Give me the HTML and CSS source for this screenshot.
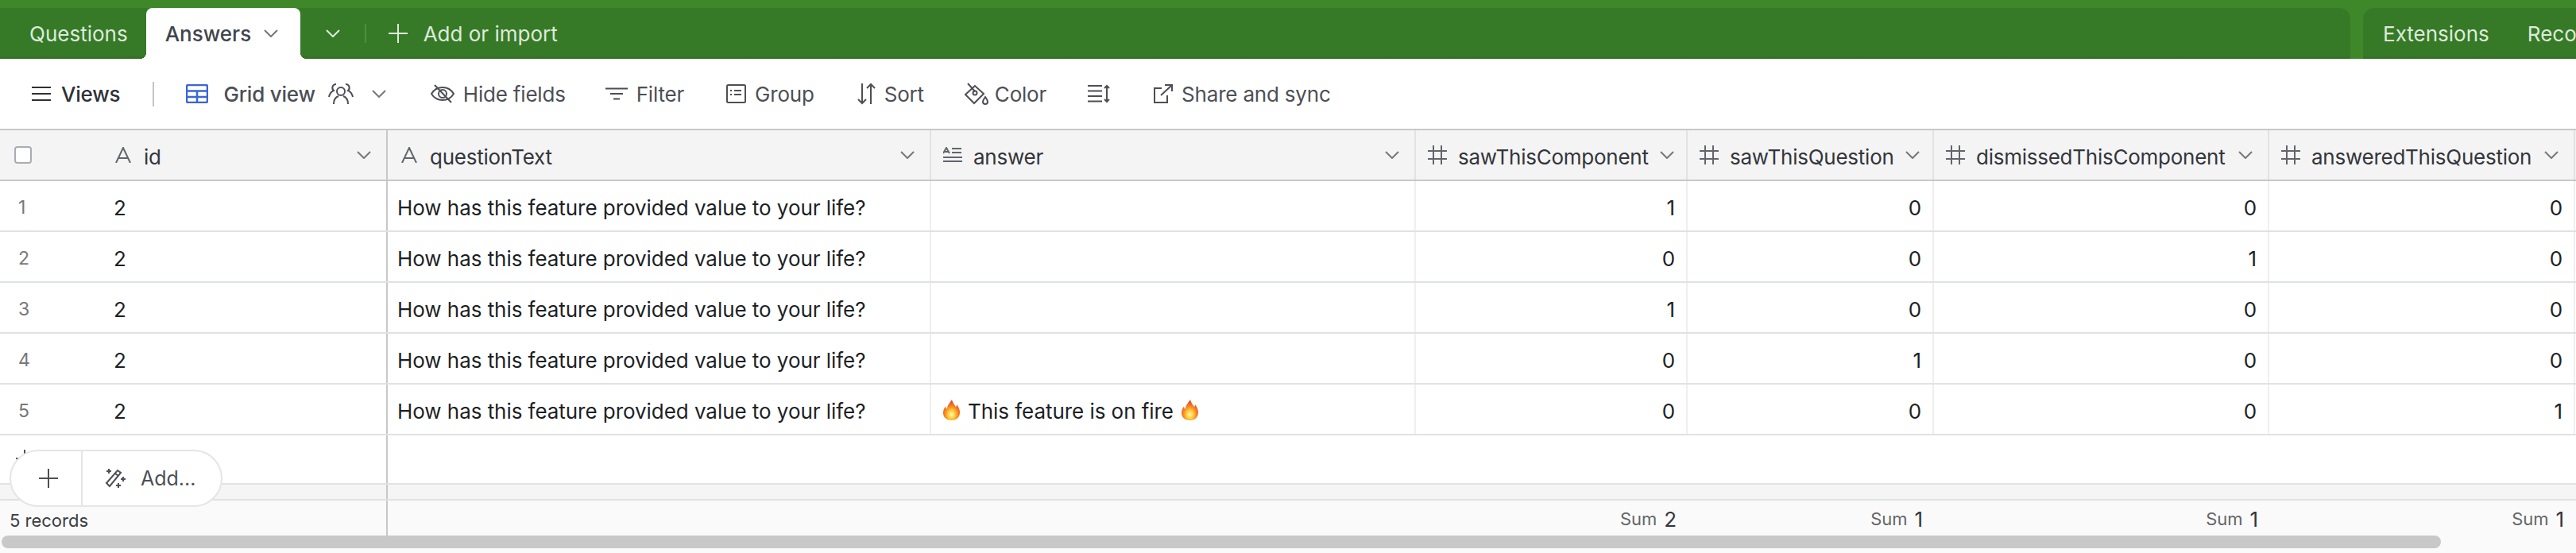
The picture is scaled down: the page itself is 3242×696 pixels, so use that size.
FILE: index.html
```html
<!DOCTYPE html>
<html lang="en">
<head>
    <meta charset="UTF-8">
    <title>Answers: Grid view</title>
    <link rel="stylesheet" href="styles.css">
</head>
<body>

    <header class="topbar">
        <nav class="tabs">
            <span class="tab">Questions</span>
            <span class="tab tab-active">Answers
                <svg class="chev" width="18" height="10" viewBox="0 0 18 10"><path d="M1 1l8 8 8-8"/></svg>
            </span>
            <svg class="chev chev-light more" width="18" height="10" viewBox="0 0 18 10"><path d="M1 1l8 8 8-8"/></svg>
            <span class="tab-sep"></span>
            <span class="add-import">
                <svg class="line-icon" width="26" height="26" viewBox="0 0 26 26"><path d="M13 1v24M1 13h24"/></svg>
                Add or import
            </span>
        </nav>
        <div class="side">
            <span class="tab">Extensions</span>
            <span class="tab-sep side-sep"></span>
            <span class="tab">Reco</span>
        </div>
    </header>

    <div class="toolbar">
        <span class="tool tool-views">
            <svg class="line-icon" width="24" height="20" viewBox="0 0 24 20"><path d="M0 2h24M0 10h24M0 18h24"/></svg>
            Views
        </span>
        <span class="tool-sep"></span>
        <span class="tool tool-view">
            <svg class="grid-icon" width="28" height="24" viewBox="0 0 28 24"><rect x="1" y="1" width="26" height="22" rx="2"/><path d="M1 8.500h26M1 16h26M14 8.500V23"/></svg>
            Grid view
            <svg class="line-icon users" width="32" height="28" viewBox="0 0 32 28"><circle cx="16" cy="11" r="5"/><path d="M7 27c0-6 3-9 6-10M25 27c0-6-3-9-6-10M10 2a4.500 4.500 0 0 0-3 8c-3 1-5 4-6 8M22 2a4.500 4.500 0 0 1 3 8c3 1 5 4 6 8"/></svg>
            <svg class="chev" width="18" height="10" viewBox="0 0 18 10"><path d="M1 1l8 8 8-8"/></svg>
        </span>
        <span class="tool tool-hide">
            <svg class="line-icon" width="30" height="24" viewBox="0 0 30 24"><path d="M1 12c3-5 8-8 14-8s11 3 14 8c-3 5-8 8-14 8S4 17 1 12z"/><circle cx="15" cy="12" r="5"/><path d="M5 1l21 22"/></svg>
            Hide fields
        </span>
        <span class="tool">
            <svg class="line-icon" width="28" height="16" viewBox="0 0 28 16"><path d="M0 1.500h28M6 8h16M10 14.500h8"/></svg>
            Filter
        </span>
        <span class="tool tool-group">
            <svg class="line-icon" width="25" height="24" viewBox="0 0 25 24"><rect x="1" y="1" width="23" height="22" rx="1.500"/><path d="M10 8h9M10 13h9"/><path class="dots" d="M6 7v2M6 12v2"/></svg>
            Group
        </span>
        <span class="tool tool-sort">
            <svg class="line-icon" width="23" height="28" viewBox="0 0 23 28"><path d="M6 1v25M1 21l5 5 5-5M17 27V2M12 7l5-5 5 5"/></svg>
            Sort
        </span>
        <span class="tool tool-color">
            <svg class="line-icon" width="31" height="28" viewBox="0 0 31 28"><path d="M14 4L2 15l11 11 12-12z"/><circle cx="14" cy="13" r="2.500"/><path d="M14 11L5 1"/><path d="M27 18c-2 3-3 4-3 6a3 3 0 0 0 6 0c0-2-1-3-3-6z"/></svg>
            Color
        </span>
        <span class="tool tool-height">
            <svg class="line-icon" width="29" height="24" viewBox="0 0 29 24"><path d="M0 2h18M0 8.500h18M0 15h18M0 21.500h18M24 2v20M21 5l3-3 3 3M21 19l3 3 3-3"/></svg>
        </span>
        <span class="tool tool-share">
            <svg class="line-icon" width="24" height="24" viewBox="0 0 24 24"><path d="M10 5H1v18h16v-9M9 14L23 1M14 1h9v8"/></svg>
            Share and sync
        </span>
    </div>

    <main class="grid">
        <div class="grid-row head-row" id="headRow"></div>
        <div id="rows"></div>
        <div class="grid-blank">
            <svg class="line-icon" width="22" height="22" viewBox="0 0 22 22"><path d="M11 0v22M0 11h22"/></svg>
        </div>
        <div class="grid-band"></div>
        <div class="grid-row foot-row" id="footRow"></div>
        <div class="scrollbar"></div>
    </main>

    <div class="add-pill">
        <span class="pill-plus">
            <svg class="line-icon" width="24" height="24" viewBox="0 0 24 24"><path d="M12 0v24M0 12h24"/></svg>
        </span>
        <span class="pill-add">
            <svg class="line-icon" width="28" height="26" viewBox="0 0 28 26"><path d="M3 19L17 3l4 3L7 23z"/><path d="M14 7l4 3M6 1v6M3 4h6M24 11v6M21 14h6M18 19v6M15 22h6"/></svg>
            Add...
        </span>
    </div>

    <script>
        const CHEV = '<svg class="chev" width="18" height="10" viewBox="0 0 18 10"><path d="M1 1l8 8 8-8"/></svg>';
        const ICONS = {
            text: '<svg class="line-icon thin" width="24" height="20" viewBox="0 0 24 20"><path d="M3 20L12 1l9 19M6 14h12"/></svg>',
            long: '<svg class="line-icon thin" width="24" height="20" viewBox="0 0 24 20"><path d="M0 8L4 1l4 7M1.500 6h5M11 2h12M11 7h12M0 13h24M0 18h24"/></svg>',
            num: '<svg class="line-icon thin" width="24" height="24" viewBox="0 0 24 24"><path d="M7 0v24M17 0v24M0 7h24M0 17h24"/></svg>'
        };
        const FLAME = '<svg class="flame" role="img" aria-label="fire" width="21" height="26" viewBox="0 0 21 26"><defs><radialGradient id="fl" cx="50%" cy="72%" r="62%"><stop offset="0" stop-color="#fff6c8"/><stop offset=".3" stop-color="#ffd23c"/><stop offset=".62" stop-color="#f98a22"/><stop offset="1" stop-color="#e5482a"/></radialGradient></defs><path fill="url(#fl)" d="M11 0c1 4 3 6 5 9 1-1 1-2 1-3 3 4 4 7 4 10 0 6-4 10-10.500 10S0 22 0 16.500c0-3 1-5 3-8 0 2 1 3 2 3C5 7 8 5 11 0z"/></svg>';

        let columns = [
            { name: "id", icon: "text" },
            { name: "questionText", icon: "text" },
            { name: "answer", icon: "long" },
            { name: "sawThisComponent", icon: "num" },
            { name: "sawThisQuestion", icon: "num" },
            { name: "dismissedThisComponent", icon: "num" },
            { name: "answeredThisQuestion", icon: "num" }
        ];

        let question = "How has this feature provided value to your life?";
        let records = [
            { answer: "", values: [1, 0, 0, 0] },
            { answer: "", values: [0, 0, 1, 0] },
            { answer: "", values: [1, 0, 0, 0] },
            { answer: "", values: [0, 1, 0, 0] },
            { answer: `${FLAME} This feature is on fire ${FLAME}`, values: [0, 0, 0, 1] }
        ];

        function headCell(col, index) {
            let first = index === 0 ? " cell-first" : "";
            return `<div class="cell head-cell${first}">${ICONS[col.icon]}<span class="head-name">${col.name}</span>${CHEV}</div>`;
        }

        function renderHead() {
            let check = '<div class="cell-num head-check"><span class="checkbox"></span></div>';
            document.getElementById("headRow").innerHTML = check + columns.map(headCell).join("");
        }

        function renderRows() {
            let html = "";
            records.forEach((rec, index) => {
                let nums = rec.values.map(v => `<div class="cell cell-right">${v}</div>`).join("");
                html += `<div class="grid-row body-row">
                    <div class="cell-num">${index + 1}</div>
                    <div class="cell cell-first">2</div>
                    <div class="cell">${question}</div>
                    <div class="cell">${rec.answer}</div>
                    ${nums}
                </div>`;
            });
            document.getElementById("rows").innerHTML = html;
        }

        function renderFoot() {
            let html = '<div class="cell-num foot-count">5 records</div><div class="cell cell-first"></div><div class="cell"></div><div class="cell"></div>';
            for (let i = 0; i < 4; i++) {
                let sum = records.reduce((total, rec) => total + rec.values[i], 0);
                html += `<div class="cell cell-right"><span class="sum-label">Sum</span><span class="sum-value">${sum}</span></div>`;
            }
            document.getElementById("footRow").innerHTML = html;
        }

        renderHead();
        renderRows();
        renderFoot();
    </script>
</body>
</html>
```

FILE: styles.css
```css
* {
    box-sizing: border-box;
}
body {
    margin: 0;
    height: 696px;
    overflow: hidden;
    position: relative;
    background: white;
    color: #1d1f25;
    font-family: Inter, "Liberation Sans", sans-serif;
    font-size: 26px;
}
svg {
    flex: none;
    display: block;
}
.line-icon path, .line-icon rect, .line-icon circle {
    fill: none;
    stroke: currentColor;
    stroke-width: 2;
}
.line-icon.thin path {
    stroke: #62656c;
}
.chev path {
    fill: none;
    stroke: #777;
    stroke-width: 2;
}
.chev-light path {
    stroke: #dfe9dc;
}

/* green tab bar */
.topbar {
    display: flex;
    height: 74px;
    padding-top: 10px;
    gap: 16px;
    background: #3e8829;
}
.tabs, .side {
    display: flex;
    align-items: center;
    background: linear-gradient(#367a27 60px, #2f6c22);
    color: #dfe9dc;
}
.tabs {
    flex: 1;
    border-top-right-radius: 14px;
}
.side {
    width: 268px;
    flex: none;
    padding-left: 25px;
    border-top-left-radius: 14px;
    white-space: nowrap;
    overflow: hidden;
}
.tab {
    display: flex;
    align-items: center;
    height: 64px;
}
.tabs > .tab:first-child {
    padding-left: 37px;
    padding-right: 23px;
}
.tab-active {
    position: relative;
    width: 194px;
    padding-left: 24px;
    gap: 16px;
    background: white;
    color: #41454d;
    font-weight: 500;
    border-radius: 8px 8px 0 0;
}
.tab-active::before, .tab-active::after {
    content: "";
    position: absolute;
    bottom: 0;
    width: 8px;
    height: 8px;
}
.tab-active::before {
    left: -8px;
    background: radial-gradient(circle at 0 0, transparent 8px, white 8px);
}
.tab-active::after {
    right: -8px;
    background: radial-gradient(circle at 100% 0, transparent 8px, white 8px);
}
.more {
    margin-left: 32px;
}
.tab-sep {
    width: 2px;
    height: 24px;
    margin-left: 31px;
    background: #4f8d40;
}
.side-sep {
    margin-left: 25px;
    margin-right: 23px;
}
.add-import {
    display: flex;
    align-items: center;
    gap: 19px;
    margin-left: 27px;
}

/* view toolbar */
.toolbar {
    display: flex;
    align-items: center;
    gap: 50px;
    height: 88px;
    padding-left: 40px;
    color: #4d4f55;
    white-space: nowrap;
    letter-spacing: -0.2px;
}
.tool {
    display: flex;
    align-items: center;
    gap: 11px;
}
.tool-views {
    gap: 13px;
    color: #2f3137;
    font-weight: 500;
}
.tool-sep {
    width: 2px;
    height: 31px;
    margin-left: -9px;
    background: #c4c4c4;
}
.tool-view {
    margin-left: -10px;
    margin-right: 6px;
    gap: 0;
    font-weight: 500;
}
.grid-icon {
    margin-right: 19px;
}
.grid-icon rect, .grid-icon path {
    fill: none;
    stroke: #3b66d6;
    stroke-width: 2.5;
}
.users {
    margin: 0 23px 0 16px;
}
.tool-group {
    margin-left: 3px;
}
.tool-sort {
    margin-left: 4px;
}
.tool-color {
    gap: 8px;
}
.tool-height {
    margin-left: 2px;
}
.tool-share {
    margin-left: 4px;
}
.dots {
    stroke-dasharray: 2 2;
}

/* grid */
.grid-row {
    display: grid;
    grid-template-columns: 129px 359px 684px 610px 342px 310px 422px 385px 1fr;
    white-space: nowrap;
}
.cell, .cell-num {
    display: flex;
    align-items: center;
    min-width: 0;
}
.cell {
    padding: 0 14px 0 12px;
    border-right: 2px solid #efefef;
    letter-spacing: -0.05px;
}
.cell-num {
    padding-left: 23px;
    color: #777;
    font-size: 23px;
}
.cell-first {
    padding-left: 14px;
    border-right-color: #c8c8c8;
}
.cell-right {
    justify-content: flex-end;
}
.head-row {
    height: 66px;
    border-top: 2px solid #c8c8c8;
    border-bottom: 2px solid #c8c8c8;
    background: #f4f4f4;
}
.head-check {
    padding-left: 18px;
}
.checkbox {
    width: 22px;
    height: 22px;
    background: white;
    border: 2px solid #a9adb3;
    border-radius: 4px;
}
.head-cell {
    padding: 0 19px 0 15px;
    gap: 14px;
    border-right-color: #e2e2e2;
    color: #33363c;
    letter-spacing: -0.25px;
}
.head-cell.cell-first {
    padding-left: 14px;
    border-right-color: #c8c8c8;
}
.head-cell .chev {
    margin-left: auto;
}
.head-name {
    margin-top: 4px;
}
.body-row {
    height: 64px;
    border-bottom: 2px solid #dfe3e2;
}
.body-row .cell, .body-row .cell-num {
    padding-top: 4px;
}
.body-row .cell {
    gap: 10px;
}
.flame {
    margin-top: -3px;
}
.flame:first-child {
    margin-left: 3px;
}
.grid-blank {
    position: relative;
    height: 62px;
    padding: 18px 0 0 20px;
    border-bottom: 2px solid #dfe3e2;
    color: #4d4f55;
    background: linear-gradient(#c8c8c8, #c8c8c8) 486px 0 / 2px 100% no-repeat;
}
.grid-band {
    height: 20px;
    border-bottom: 2px solid #dfe3e2;
    background: linear-gradient(#c8c8c8, #c8c8c8) 486px 0 / 2px 100% no-repeat, #f5f5f5;
}
.foot-row {
    height: 66px;
    padding-bottom: 22px;
    background: #fafafa;
}
.foot-row .cell {
    padding-top: 2px;
    padding-right: 12px;
    gap: 9px;
    border-right-color: transparent;
}
.foot-row .cell-first {
    border-right-color: #c8c8c8;
}
.foot-count {
    padding-top: 6px;
    padding-left: 12px;
    color: #3b3d42;
    font-size: 22px;
}
.sum-label {
    color: #666;
    font-size: 22px;
}
.sum-value {
    color: #33363c;
}
.scrollbar {
    position: absolute;
    left: 2px;
    top: 674px;
    width: 3070px;
    height: 16px;
    border-radius: 8px;
    background: #c8c8c8;
}

/* floating add button */
.add-pill {
    position: absolute;
    left: 12px;
    top: 566px;
    display: flex;
    width: 268px;
    height: 72px;
    background: white;
    border: 2px solid #e5e5e5;
    border-radius: 36px;
    color: #4d4f55;
}
.pill-plus {
    display: flex;
    align-items: center;
    justify-content: center;
    width: 90px;
    padding-left: 6px;
    border-right: 2px solid #e5e5e5;
}
.pill-add {
    display: flex;
    align-items: center;
    gap: 18px;
    padding-left: 27px;
    font-size: 25px;
}
```
